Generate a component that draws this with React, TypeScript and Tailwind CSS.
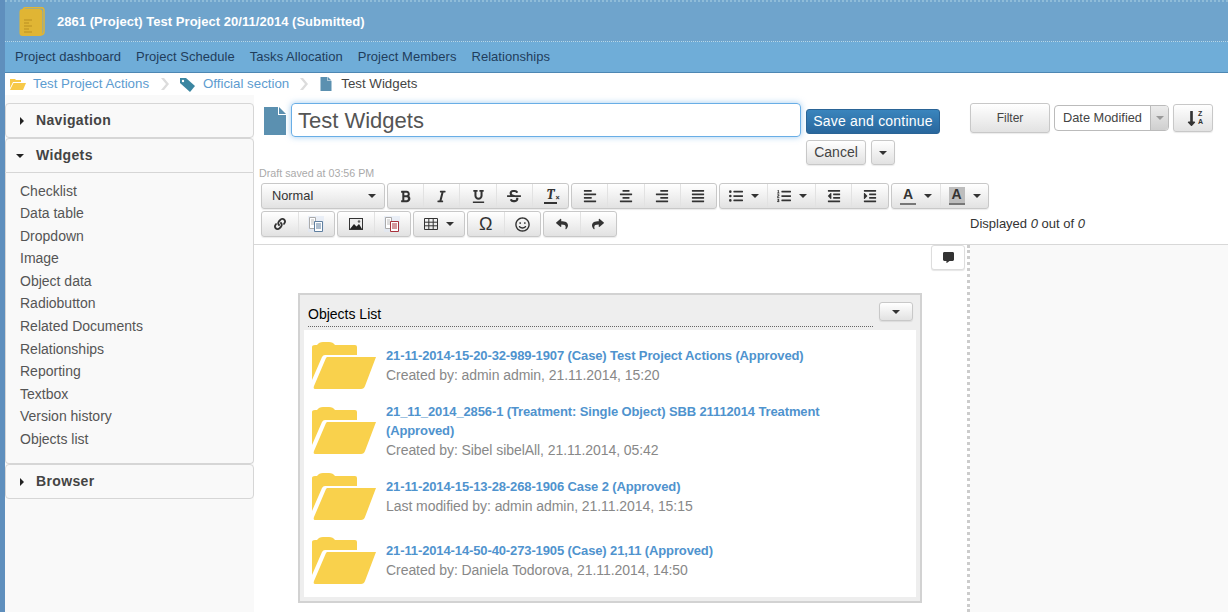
import React from "react";
import {
  FaBold, FaItalic, FaUnderline, FaStrikethrough, FaAlignLeft, FaAlignCenter, FaAlignRight, FaAlignJustify,
  FaListUl, FaListOl, FaOutdent, FaIndent, FaLink, FaRegSmile, FaReply, FaShare, FaCommentAlt, FaLongArrowAltDown,
} from "react-icons/fa";

const Caret = ({ className = "" }: { className?: string }) => (
  <span className={"inline-block w-0 h-0 border-l-[4px] border-r-[4px] border-t-[4px] border-l-transparent border-r-transparent border-t-[#333] " + className} />
);

const Folder = () => (
  <svg width="64" height="47" viewBox="0 0 64 47" className="shrink-0">
    <path d="M0 5q0-2 3-2h2q2-3 6-3h6q4 0 6 3h20q2 0 2 2v8H13q-2 0-3 2L0 38z" fill="#f9d14c" />
    <path d="M15 15H64L53 44q-1 3-4 3H3q-2 0-1-3L14 16z" fill="#f9d14c" />
  </svg>
);

const Doc = ({ w, h }: { w: number; h: number }) => (
  <svg width={w} height={h} viewBox="0 0 22 28" className="shrink-0">
    <path d="M0 0h14v8h8v20H0z" fill="#5b90b0" />
    <path d="M15 0l7 7h-7z" fill="#5b90b0" />
  </svg>
);

const Chevron = () => (
  <svg width="8" height="12" viewBox="0 0 8 12" className="shrink-0">
    <path d="M0 0h3l5 6-5 6H0l5-6z" fill="#dcdcdc" />
  </svg>
);

const CopyIcon = ({ red }: { red?: boolean }) => (
  <svg width="16" height="16" viewBox="0 0 16 16">
    <rect x="0" y="0" width="16" height="16" fill="#dfe8f5" opacity="0.6" />
    <path d="M1.5 1.5h6v11h-6z" fill="#fff" stroke="#aaa" />
    <path d="M3 4h3M3 6h3M3 8h3" stroke="#bbb" />
    <path d="M6.5 5.5h8v10h-8z" fill="#fff" stroke={red ? "#a8323c" : "#5f7f9f"} />
    <path d="M8 8h5M8 10h5M8 12h5" stroke={red ? "#a8323c" : "#5f7f9f"} />
  </svg>
);

const GridIcon = () => (
  <svg width="14" height="12" viewBox="0 0 14 12">
    <path d="M.5.5h13v11H.5zM.5 4.2h13M.5 7.8h13M4.8.5v11M9.2.5v11" fill="none" stroke="#333" />
  </svg>
);

const ImgIcon = () => (
  <svg width="14" height="12" viewBox="0 0 14 12">
    <rect x=".5" y=".5" width="13" height="11" fill="#eee" stroke="#333" />
    <path d="M1 11l4-5 2.5 2.5L10 6l3 5z" fill="#222" />
    <circle cx="10" cy="3.5" r="1.3" fill="#666" />
  </svg>
);

const grad = "bg-gradient-to-b from-white to-[#e2e2e2] border border-[#c8c8c8] rounded-[3px] shadow-[0_1px_1px_rgba(0,0,0,0.08)]";

const Group = ({ children, w }: { children: React.ReactNode; w: string }) => (
  <div className={"flex items-stretch h-[26px] " + grad + " " + w}>{children}</div>
);

const Tb = ({ children, last, w = "flex-1" }: { children: React.ReactNode; last?: boolean; w?: string }) => (
  <div className={"flex items-center justify-center gap-2 text-[#333] text-[13px] " + w + (last ? "" : " border-r border-[#e2e2e2]")}>{children}</div>
);

const ColorA = ({ bg }: { bg?: boolean }) => (
  <span className={"flex flex-col items-center w-[16px] h-[18px] leading-[15px] text-[14px] font-bold text-[#333] " + (bg ? "bg-[#bdbdbd] " : "")}>
    A
    <span className="block w-[16px] h-[2px] bg-[#777] mt-auto" />
  </span>
);

const links = ["Checklist", "Data table", "Dropdown", "Image", "Object data", "Radiobutton", "Related Documents", "Relationships", "Reporting", "Textbox", "Version history", "Objects list"];
const nav = ["Project dashboard", "Project Schedule", "Tasks Allocation", "Project Members", "Relationships"];
const items = [
  { t: "21-11-2014-15-20-32-989-1907 (Case) Test Project Actions (Approved)", s: "Created by: admin admin, 21.11.2014, 15:20" },
  { t: "21_11_2014_2856-1 (Treatment: Single Object) SBB 21112014 Treatment (Approved)", s: "Created by: Sibel sibelAll, 21.11.2014, 05:42" },
  { t: "21-11-2014-15-13-28-268-1906 Case 2 (Approved)", s: "Last modified by: admin admin, 21.11.2014, 15:15" },
  { t: "21-11-2014-14-50-40-273-1905 (Case) 21,11 (Approved)", s: "Created by: Daniela Todorova, 21.11.2014, 14:50" },
];

const AccHead = ({ label, open }: { label: string; open?: boolean }) => (
  <div className={"flex items-center h-[35px] bg-[#f9f9f9] border border-[#d6d6d6] " + (open ? "rounded-t-[4px]" : "rounded-[4px]")}>
    {open ? <Caret className="ml-[10px] mr-[12px] !border-t-[#222]" /> : (
      <span className="inline-block w-0 h-0 ml-[14px] mr-[12px] border-t-[4px] border-b-[4px] border-l-[4px] border-t-transparent border-b-transparent border-l-[#222]" />
    )}
    <span className="font-bold text-[14px] tracking-[0.35px] text-[#444]">{label}</span>
  </div>
);

export default function App() {
  return (
    <div className="flex w-[1228px] h-[612px] overflow-hidden bg-white text-[14px] text-[#444]" style={{ fontFamily: '"Liberation Sans", Arial, sans-serif' }}>
      <div className="w-[5px] shrink-0 bg-[#5f8fbd]" />
      <div className="flex-1 flex flex-col min-w-0">
        {/* title bar */}
        <div className="h-[42px] shrink-0 bg-[#6fa4cc] border-t-[2px] border-b border-t-[#8fbcd8] border-b-[#b5d8ea] border-dotted flex items-center pl-[14px]">
          <svg width="26" height="29" viewBox="0 0 26 29" className="shrink-0">
            <rect x="4" y="0.7" width="21" height="27" rx="3" fill="none" stroke="#e0b534" strokeWidth="1.5" />
            <rect x="0.5" y="2" width="23" height="27" rx="3" fill="#e0b534" />
            <path d="M5 13h8M5 16h5M5 19h8M5 22h5M5 25h8" stroke="#c69c27" strokeWidth="1.3" />
          </svg>
          <span className="ml-[12px] mt-[1px] font-bold text-white text-[13px] tracking-[0.03px]">2861 (Project) Test Project 20/11/2014 (Submitted)</span>
        </div>
        {/* nav */}
        <div className="h-[31px] shrink-0 bg-[#6fadd8] border-b border-[#4d87b3] flex items-center pl-[10px] gap-[15px] text-[13px] tracking-[0.03px] text-[#1f3d5c]">
          {nav.map((n) => <span key={n}>{n}</span>)}
        </div>
        {/* breadcrumb */}
        <div className="h-[22px] shrink-0 flex items-center pl-[5px] text-[13.3px]">
          <svg width="16" height="12" viewBox="0 0 16 12" className="shrink-0">
            <path d="M0 1h5l1 1h5v2H3L0 10z" fill="#f7c948" />
            <path d="M3.5 5H16l-3 7H0z" fill="#f7c948" />
          </svg>
          <span className="ml-[7px] text-[#5d9cd0]">Test Project Actions</span>
          <span className="ml-[12px]"><Chevron /></span>
          <svg width="15" height="15" viewBox="0 0 15 15" className="ml-[11px] shrink-0">
            <path d="M0 1h6l9 8-5 6-10-9z" fill="#3b86a1" />
            <circle cx="3" cy="4" r="1.2" fill="#fff" />
          </svg>
          <span className="ml-[8px] text-[#5d9cd0]">Official section</span>
          <span className="ml-[11px]"><Chevron /></span>
          <span className="ml-[12px]"><Doc w={12} h={14} /></span>
          <span className="ml-[9px] text-[#444]">Test Widgets</span>
        </div>
        <div className="flex flex-1 min-h-0">
          {/* sidebar */}
          <div className="w-[249px] shrink-0 bg-[#f9f9f9] pt-[8px] flex flex-col">
            <AccHead label="Navigation" />
            <AccHead label="Widgets" open />
            <div className="border-x border-b border-[#d6d6d6] rounded-b-[4px] h-[291px] pt-[6.7px] pl-[14px] text-[#555]">
              {links.map((l) => <div key={l} className="h-[22.55px] leading-[22px]">{l}</div>)}
            </div>
            <AccHead label="Browser" />
          </div>
          {/* main */}
          <div className="flex-1 min-w-0 flex flex-col">
            <div className="h-[150px] shrink-0 border-b border-[#d8d8d8] relative">
              <div className="flex pt-[8px] h-[70px]">
                <div className="ml-[10px] mt-[4px]"><Doc w={22} h={28} /></div>
                <div className="ml-[5px] w-[510px] h-[34px] border border-[#69aee6] rounded-[4px] shadow-[0_0_6px_rgba(100,170,230,0.6)] pl-[6px] text-[22px] leading-[33px] text-[#555]">Test Widgets</div>
                <div className="ml-[5px] w-[134px] flex flex-col">
                  <div className="mt-[6px] h-[25px] rounded-[3px] bg-gradient-to-b from-[#3a85bd] to-[#29679d] border border-[#2a6496] text-white text-center leading-[23px] tracking-[0.2px]">Save and continue</div>
                  <div className="mt-[6px] flex">
                    <div className={"w-[60px] h-[25px] text-center leading-[23px] " + grad}>Cancel</div>
                    <div className={"ml-[5px] w-[24px] h-[25px] flex items-center justify-center " + grad}><Caret /></div>
                  </div>
                </div>
                <div className="ml-[30px] flex items-start">
                  <div className={"w-[80px] h-[30px] text-center leading-[28px] text-[12px] " + grad}>Filter</div>
                  <div className="ml-[4px] mt-[2px] w-[115px] h-[26px] flex border border-[#bbb] rounded-[4px] text-[#444]">
                    <span className="flex-1 pl-[8px] leading-[23px] text-[12.8px]">Date Modified</span>
                    <span className="w-[18px] flex items-center justify-center bg-gradient-to-b from-[#ececec] to-[#cfcfcf] border-l border-[#bbb] rounded-r-[3px]"><Caret className="!border-t-[#999]" /></span>
                  </div>
                  <div className={"ml-[4px] mt-px w-[40px] h-[28px] flex items-center justify-center " + grad}>
                    <FaLongArrowAltDown size={17} className="text-[#333] -mr-[2px]" />
                    <span className="flex flex-col text-[7px] leading-[8px] font-bold text-[#333]"><span>Z</span><span>A</span></span>
                  </div>
                </div>
              </div>
              <div className="ml-[5px] h-[13px] mt-[2px] text-[10.7px] leading-[13px] text-[#aaa]">Draft saved at 03:56 PM</div>
              <div className="flex ml-[7px] mt-[3px] gap-[2px]">
                <Group w="w-[124px]">
                  <div className="flex-1 flex items-center justify-between pl-[10px] pr-[8px] text-[12.8px] text-[#333]">Normal<Caret /></div>
                </Group>
                <Group w="w-[182px]">
                  <Tb><FaBold size={13} /></Tb><Tb><FaItalic size={13} /></Tb><Tb><FaUnderline size={13} /></Tb><Tb><FaStrikethrough size={14} /></Tb>
                  <Tb last><span className="relative font-serif italic font-bold text-[14px] leading-[14px] border-b-[2px] border-[#333] w-[13px] text-center">T<span className="absolute -right-[3px] bottom-0 text-[8px] not-italic leading-[8px]">×</span></span></Tb>
                </Group>
                <Group w="w-[146px]">
                  <Tb><FaAlignLeft size={14} /></Tb><Tb><FaAlignCenter size={14} /></Tb><Tb><FaAlignRight size={14} /></Tb><Tb last><FaAlignJustify size={14} /></Tb>
                </Group>
                <Group w="w-[170px]">
                  <Tb w="w-[48px]"><FaListUl size={14} /><Caret /></Tb><Tb w="w-[48px]"><FaListOl size={14} /><Caret /></Tb><Tb w="w-[36px]"><FaOutdent size={14} /></Tb><Tb w="flex-1" last><FaIndent size={14} /></Tb>
                </Group>
                <Group w="w-[98px]">
                  <Tb w="w-[49px]"><ColorA /><Caret /></Tb><Tb last w="flex-1"><ColorA bg /><Caret /></Tb>
                </Group>
              </div>
              <div className="flex items-center mt-[2px] ml-[7px]">
                <div className="flex gap-[2px] w-[709px]">
                  <Group w="w-[74px]"><Tb><FaLink size={12} /></Tb><Tb last><CopyIcon /></Tb></Group>
                  <Group w="w-[74px]"><Tb><ImgIcon /></Tb><Tb last><CopyIcon red /></Tb></Group>
                  <Group w="w-[52px]"><Tb last><GridIcon /><Caret /></Tb></Group>
                  <Group w="w-[74px]"><Tb><span className="text-[18px] leading-none">Ω</span></Tb><Tb last><FaRegSmile size={15} /></Tb></Group>
                  <Group w="w-[74px]"><Tb><FaReply size={12} /></Tb><Tb last><FaShare size={12} /></Tb></Group>
                </div>
                <span className="text-[13px] leading-[26px] text-[#333]">Displayed <i>0</i> out of <i>0</i></span>
              </div>
            </div>
            <div className="flex flex-1 min-h-0">
              <div className="relative w-[716px] shrink-0 border-r-[3px] border-dotted border-[#ccc] pl-[44px] pt-[48px]">
                <div className="absolute right-[2px] top-0 w-[34px] h-[25px] bg-white border border-[#ddd] rounded-[3px] shadow-[0_1px_1px_rgba(0,0,0,0.1)] flex items-center justify-center">
                  <FaCommentAlt size={11} className="text-[#333]" />
                </div>
                <div className="w-[624px] h-[310px] border-2 border-[#d2d2d2] bg-[#eee] px-[4px] pb-[4px] flex flex-col">
                  <div className="flex h-[35px] shrink-0 px-[4px]">
                    <div className="flex-1 mt-[8px] h-[24px] mr-[6px] border-b border-dotted border-[#666] text-[14px] text-black leading-[22px]">Objects List</div>
                    <div className={"mt-[7px] -mr-px w-[34px] h-[19px] flex items-center justify-center " + grad}><Caret /></div>
                  </div>
                  <div className="flex-1 bg-white pt-[3px] pl-[8px]">
                    {items.map((it, i) => (
                      <div key={it.s} className={"flex items-center " + (i === 1 ? "mb-[1px]" : "")}>
                        <div className="my-[8.5px]"><Folder /></div>
                        <div className="ml-[10px] w-[480px] py-[3.5px]">
                          <div className="pt-[1px] font-bold text-[13px] tracking-[-0.12px] leading-[19.5px] text-[#4f93ce]">{it.t}</div>
                          <div className="text-[14px] tracking-[-0.06px] leading-[19px] text-[#888]">{it.s}</div>
                        </div>
                      </div>
                    ))}
                  </div>
                </div>
              </div>
              <div className="flex-1 bg-[#f9f9f9]" />
            </div>
          </div>
        </div>
      </div>
    </div>
  );
}
